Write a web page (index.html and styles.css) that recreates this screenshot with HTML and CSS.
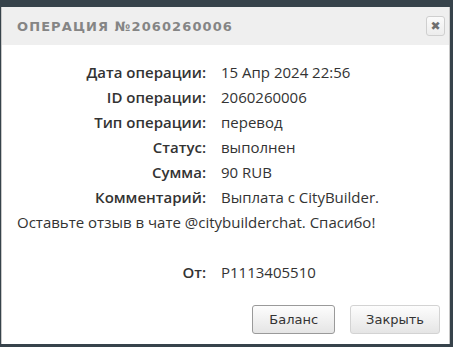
FILE: index.html
```html
<html lang="ru">
<head>
    <meta charset="UTF-8">
    <title>Операция</title>
    <link rel="stylesheet" href="styles.css">
</head>
<body>
    <div class="dialog">
        <div class="dialog-head">
            <span class="dialog-title">Операция №2060260006</span>
            <button class="close-btn" aria-label="Закрыть">&#10006;</button>
        </div>
        <div class="dialog-body">
            <div class="row"><span class="lbl">Дата операции:</span><span class="val">15 Апр 2024 22:56</span></div>
            <div class="row"><span class="lbl">ID операции:</span><span class="val">2060260006</span></div>
            <div class="row"><span class="lbl">Тип операции:</span><span class="val">перевод</span></div>
            <div class="row"><span class="lbl">Статус:</span><span class="val">выполнен</span></div>
            <div class="row"><span class="lbl">Сумма:</span><span class="val">90 RUB</span></div>
            <div class="row"><span class="lbl">Комментарий:</span><span class="val">Выплата с CityBuilder.</span></div>
            <div class="note">Оставьте отзыв в чате @citybuilderchat. Спасибо!</div>
            <div class="row spacer"></div>
            <div class="row"><span class="lbl">От:</span><span class="val">P1113405510</span></div>
        </div>
        <div class="dialog-foot">
            <button class="btn btn-focus">Баланс</button>
            <button class="btn">Закрыть</button>
        </div>
    </div>
</body>
</html>
```

FILE: styles.css
```css
body {
    margin: 0;
    padding-top: 7px;
    background: #37434b;
    height: 347px;
    box-sizing: border-box;
}
.dialog {
    margin-left: 1px;
    width: 449px;
    height: 337px;
    background: #fff;
    border-left: 1px solid #c8c8c8;
    border-right: 1px solid #c8c8c8;
    box-sizing: border-box;
    display: flex;
    flex-direction: column;
}
.dialog-head {
    height: 38px;
    background: #efefef;
    display: flex;
    align-items: center;
    justify-content: space-between;
    padding: 0 4px 0 15px;
}
.dialog-title {
    font-family: "DejaVu Sans", sans-serif;
    font-weight: bold;
    font-size: 13px;
    letter-spacing: 1.1px;
    text-transform: uppercase;
    color: #858585;
}
.close-btn {
    width: 19px;
    height: 20px;
    padding: 0;
    border: 1px solid #cfcfcf;
    border-radius: 3px;
    background: linear-gradient(#fbfbfb, #ececec);
    color: #6f6f6f;
    font-size: 12px;
    font-weight: bold;
    line-height: 18px;
    font-family: "DejaVu Sans", sans-serif;
}
.dialog-body {
    flex: 1;
    padding: 15px 15px 0 15px;
    font-family: "Open Sans", sans-serif;
    font-size: 15px;
    color: #333;
}
.row {
    display: grid;
    grid-template-columns: 189px auto;
    column-gap: 15px;
    height: 25px;
    line-height: 25px;
}
.lbl {
    text-align: right;
    font-weight: 600;
}
.note {
    height: 25px;
    line-height: 25px;
}
.dialog-foot {
    display: flex;
    justify-content: flex-end;
    gap: 15px;
    padding: 0 9px 10px 0;
}
.btn {
    height: 29px;
    padding: 0 15px;
    font-family: "DejaVu Sans", sans-serif;
    font-size: 13px;
    color: #333;
    border: 1px solid #d3d3d3;
    border-radius: 3px;
    background: linear-gradient(#fdfdfd, #e5e5e5);
}
.btn-focus {
    padding: 0 16px;
    border-color: #9a9a9a;
}
```
